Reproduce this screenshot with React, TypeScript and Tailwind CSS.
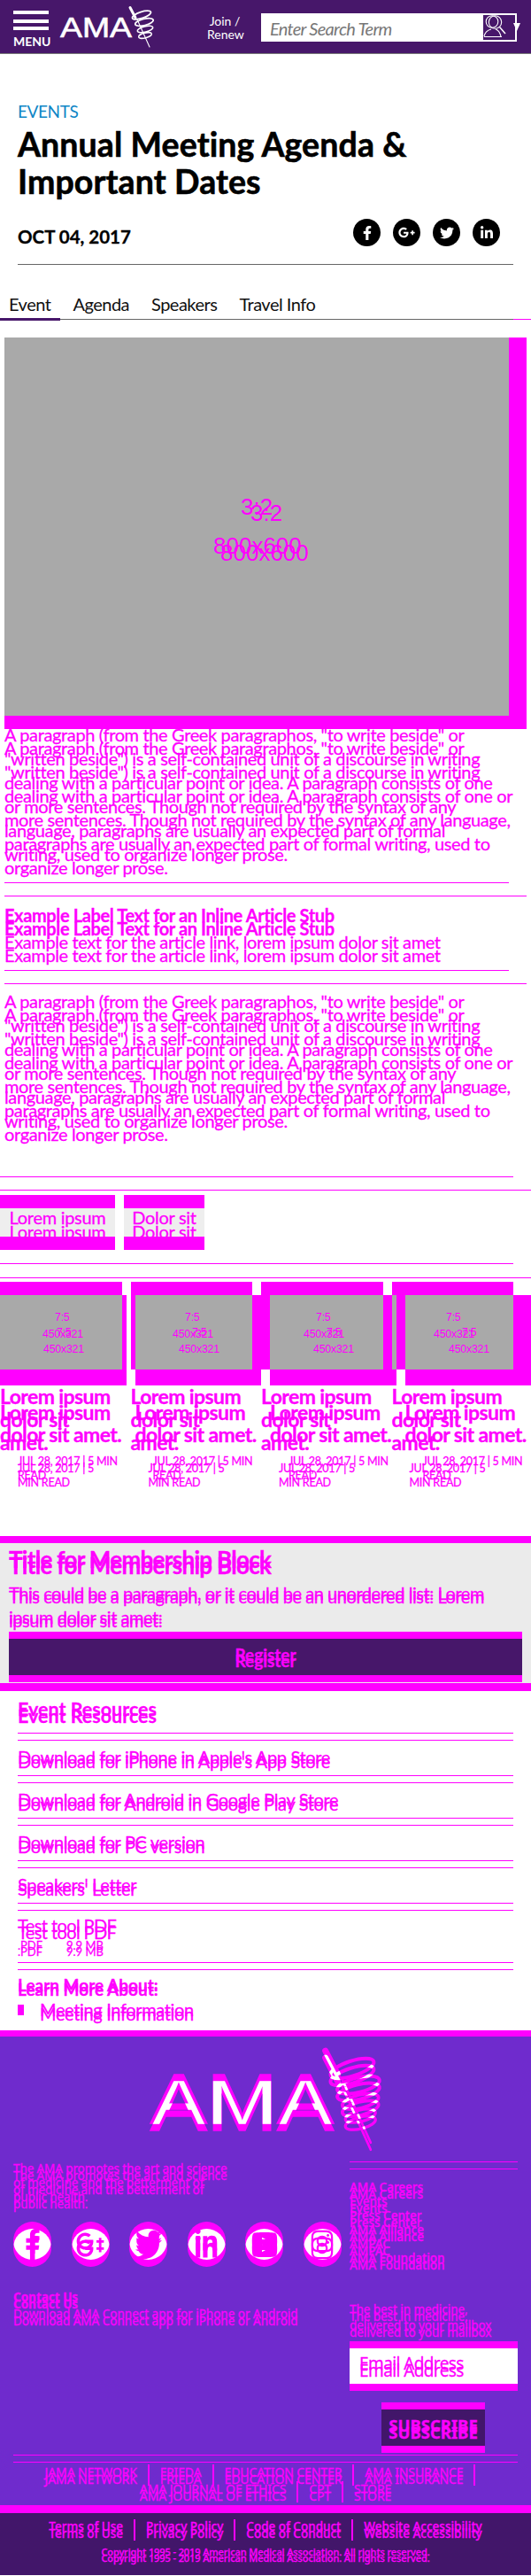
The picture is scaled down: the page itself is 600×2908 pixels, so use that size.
import React from "react";
import { FaFacebookF, FaGooglePlusG, FaTwitter, FaLinkedinIn, FaYoutube, FaInstagram } from "react-icons/fa";

const M = "text-[#ff00ff] [-webkit-text-stroke:0.3px_#ff00ff]";

function L({ t }: { t: string[] }) {
  return (
    <>
      {t.map((s, i) => (
        <div key={i} className="whitespace-nowrap">{s}</div>
      ))}
    </>
  );
}

function Dbl({ a, b, bCls, className }: { a: React.ReactNode; b: React.ReactNode; bCls: string; className?: string }) {
  return (
    <div className={`grid ${className ?? ""}`}>
      <div className="[grid-area:1/1]">{a}</div>
      <div className={`[grid-area:1/1] ${bCls}`}>{b}</div>
    </div>
  );
}

function Rule({ className }: { className: string }) {
  return <div className={`h-px bg-[#ff00ff] ${className}`} />;
}

const paraA = [
  'A paragraph (from the Greek paragraphos, "to write beside" or',
  '"written beside") is a self-contained unit of a discourse in writing',
  "dealing with a particular point or idea. A paragraph consists of one",
  "or more sentences. Though not required by the syntax of any",
  "language, paragraphs are usually an expected part of formal",
  "writing, used to organize longer prose.",
];
const paraB = [
  'A paragraph (from the Greek paragraphos, "to write beside" or',
  '"written beside") is a self-contained unit of a discourse in writing',
  "dealing with a particular point or idea. A paragraph consists of one or",
  "more sentences. Though not required by the syntax of any language,",
  "paragraphs are usually an expected part of formal writing, used to",
  "organize longer prose.",
];

function Para({ className }: { className: string }) {
  return (
    <div className={`ml-[5px] text-[20px] leading-[27px] tracking-[-0.36px] ${M} ${className}`}>
      <Dbl a={<L t={paraA} />} b={<L t={paraB} />} bCls="mt-[15px]" />
    </div>
  );
}

function SerpentShape() {
  return (
    <g fill="none" strokeLinecap="round">
      <path d="M2 0.5 L8 12" strokeWidth="3" />
      <path d="M10 14 L24 45" strokeWidth="1.1" />
      <ellipse cx="15" cy="9" rx="11" ry="3.6" transform="rotate(-18 15 9)" strokeWidth="1.7" />
      <ellipse cx="18" cy="17" rx="10.5" ry="3.6" transform="rotate(-14 18 17)" strokeWidth="1.7" />
      <ellipse cx="19" cy="25" rx="9" ry="3.2" transform="rotate(-14 19 25)" strokeWidth="1.6" />
      <ellipse cx="19" cy="32" rx="7.5" ry="2.8" transform="rotate(-14 19 32)" strokeWidth="1.4" />
    </g>
  );
}

function HeaderLogo() {
  return (
    <svg width="115" height="60" viewBox="0 0 115 60" className="block">
      <text
        x="4"
        y="42"
        fontFamily="'Liberation Sans',sans-serif"
        fontSize="31"
        fill="#fff"
        stroke="#fff"
        strokeWidth="0.6"
        textLength="81"
        lengthAdjust="spacingAndGlyphs"
      >
        AMA
      </text>
      <g stroke="#fff" transform="translate(81 8)">
        <SerpentShape />
      </g>
    </svg>
  );
}

function FooterLogo() {
  const txt = (y: number, fill: string, mask?: string) => (
    <text
      x="5"
      y={y}
      fontFamily="'Liberation Sans',sans-serif"
      fontSize="80"
      fill={fill}
      stroke={fill}
      strokeWidth="1.6"
      textLength="207"
      lengthAdjust="spacingAndGlyphs"
      mask={mask}
    >
      AMA
    </text>
  );
  const snake = (dy: number, col: string, mask?: string) => (
    <g mask={mask}>
      <g stroke={col} transform={`translate(198 ${5 + dy}) scale(2.33)`}>
        <SerpentShape />
      </g>
    </g>
  );
  return (
    <svg width="275" height="120" viewBox="0 0 275 120" className="ml-[165px] block">
      <defs>
        <mask id="ftr-t" maskUnits="userSpaceOnUse" x="0" y="0" width="275" height="120">
          {txt(96, "#fff")}
        </mask>
        <mask id="ftr-s" maskUnits="userSpaceOnUse" x="0" y="0" width="275" height="120">
          {snake(8, "#fff")}
        </mask>
      </defs>
      {txt(88, "#ff00ff")}
      {txt(96, "#ff00ff")}
      {txt(88, "#fff", "url(#ftr-t)")}
      {snake(0, "#ff00ff")}
      {snake(8, "#ff00ff")}
      {snake(0, "#fff", "url(#ftr-s)")}
    </svg>
  );
}

function Header() {
  return (
    <div className="flex h-[61px] border-b border-[#777] bg-[#47176a]">
      <div className="ml-[15px] w-[40px]">
        <div className="mt-[12px] h-[4px] bg-white" />
        <div className="mt-[6px] h-[4px] bg-white" />
        <div className="mt-[4px] h-[4px] bg-white" />
        <div className="mt-[6px] text-center text-[14px] font-bold leading-[14px] text-white">MENU</div>
      </div>
      <div className="ml-[9px] w-[115px]">
        <HeaderLogo />
      </div>
      <div className="ml-[55px] mt-[16px] w-[40px] text-center text-[14px] leading-[15px] text-white">
        Join /<br />Renew
      </div>
      <div className="relative ml-[21px] mt-[15px] flex h-[32px] w-[289px] bg-white">
        <div className="w-[251px] pl-[10px] text-[20px] italic leading-[34px] tracking-[-0.7px] text-[#777]">Enter Search Term</div>
        <div className="h-[32px] w-[38px] border-2 border-l-0 border-white bg-[#47176a]">
          <svg width="28" height="28" viewBox="0 0 28 28" fill="none" stroke="#fff" strokeWidth="1.1" className="block">
            <circle cx="10" cy="7.5" r="6.8" />
            <circle cx="13.5" cy="8" r="7.2" />
            <path d="M18.5 13.5 L25 21" strokeWidth="1.5" />
            <path d="M1 24 C2 19 5 17 9 16 M14 16 C17 17 19 20 20 24 M1 24.5 H21" />
          </svg>
        </div>
        <div className="absolute left-[285px] top-[11px] h-0 w-0 border-x-[4.5px] border-t-[9px] border-x-transparent border-t-white" />
      </div>
    </div>
  );
}

function Hero() {
  const icons = [FaFacebookF, FaGooglePlusG, FaTwitter, FaLinkedinIn];
  return (
    <div>
      <div className="ml-[20px] mt-[53px] h-[24px] text-[19px] leading-[24px] tracking-[-0.4px] text-[#0f86c6]">EVENTS</div>
      <div className="ml-[20px] mt-[4px] text-[37.5px] font-bold leading-[41.5px] tracking-[0.1px] text-black [-webkit-text-stroke:0.6px_#000]">
        Annual Meeting Agenda &amp;<br />Important Dates
      </div>
      <div className="mx-[20px] mt-[22px] flex h-[31px]">
        <div className="w-[375px] pt-[8px] text-[20.5px] font-bold leading-[24px] text-black [-webkit-text-stroke:0.3px_#000]">OCT 04, 2017</div>
        <div className="ml-[4px] flex gap-[14px]">
          {icons.map((I, i) => (
            <div key={i} className="flex h-[31px] w-[31px] items-center justify-center rounded-full bg-black text-white">
              <I size={i === 1 ? 19 : 16} />
            </div>
          ))}
        </div>
      </div>
      <div className="ml-[20px] mt-[20px] h-px w-[560px] bg-[#666]" />
      <div className="flex h-[61px] gap-[25px] pl-[10px] pt-[32px] text-[20px] leading-[24px] tracking-[-0.5px] text-[#111]">
        <span>Event</span>
        <span>Agenda</span>
        <span>Speakers</span>
        <span>Travel Info</span>
      </div>
      <div className="relative flex h-px">
        <div className="w-[580px] bg-[#666]" />
        <div className="w-[20px] bg-[#ff00ff]" />
        <div className="absolute -top-px left-0 h-[3px] w-[68px] bg-[#47176a]" />
      </div>
    </div>
  );
}

function Hero2() {
  return (
    <div className="ml-[5px] mt-[20px] w-[590px]">
      <div className="flex h-[427px]">
        <div className="relative w-[570px] bg-[#a9a9a9] [font-family:'Liberation_Sans',sans-serif] text-[26px] leading-[30px] text-[#ff00ff]">
          <div className="absolute left-[267px] top-[176px]">3:2</div>
          <div className="absolute left-[278px] top-[183px]">3:2</div>
          <div className="absolute left-[236px] top-[220px]">800x600</div>
          <div className="absolute left-[244px] top-[228px]">800x600</div>
        </div>
        <div className="w-[20px] bg-[#ff00ff]" />
      </div>
      <div className="h-[15px] bg-[#ff00ff]" />
    </div>
  );
}

function Tag({ t, w }: { t: string; w: string }) {
  return (
    <div className={`${w} h-[62px] border-y-[15px] border-[#ff00ff] bg-[#eee] text-center text-[20px] leading-[16px] tracking-[-0.3px] ${M}`}>
      <div className="pt-[2px]">{t}</div>
      <div>{t}</div>
    </div>
  );
}

function ImgText({ x, y, t }: { x: string; y: string; t: string }) {
  return <div className={`absolute whitespace-nowrap [font-family:'Liberation_Sans',sans-serif] text-[12.5px] leading-[14px] tracking-[-0.3px] text-[#ff00ff] ${x} ${y}`}>{t}</div>;
}

function ImageStrips() {
  const W = "bg-white";
  const P = "bg-[#ff00ff]";
  const G = "bg-[#a9a9a9]";
  return (
    <div className="relative mt-[4px]">
      <div className="flex h-[15px]">
        <div className={`w-[138px] ${P}`} />
        <div className="w-[10px]" />
        <div className={`w-[137px] ${P}`} />
        <div className="w-[10px]" />
        <div className={`w-[138px] ${P}`} />
        <div className="w-[10px]" />
        <div className={`w-[137px] ${P}`} />
      </div>
      <div className="flex h-[84px]">
        <div className={`w-[138px] ${G}`} />
        <div className={`w-[5px] ${P}`} />
        <div className={`w-[5px] ${W}`} />
        <div className={`w-[5px] ${P}`} />
        <div className={`w-[132px] ${G}`} />
        <div className={`w-[20px] ${P}`} />
        <div className={`w-[128px] ${G}`} />
        <div className={`w-[10px] ${P}`} />
        <div className={`w-[5px] ${G}`} />
        <div className={`w-[10px] ${P}`} />
        <div className={`w-[122px] ${G}`} />
        <div className={`w-[20px] ${P}`} />
      </div>
      <div className="flex h-[18px]">
        <div className={`w-[143px] ${P}`} />
        <div className="w-[10px]" />
        <div className={`w-[142px] ${P}`} />
        <div className="w-[10px]" />
        <div className={`w-[143px] ${P}`} />
        <div className="w-[10px]" />
        <div className={`w-[142px] ${P}`} />
      </div>
      <ImgText x="left-[62px]" y="top-[33px]" t="7:5" />
      <ImgText x="left-[48px]" y="top-[52px]" t="450x321" />
      <ImgText x="left-[64px]" y="top-[50px]" t="7:5" />
      <ImgText x="left-[49px]" y="top-[69px]" t="450x321" />
      <ImgText x="left-[209px]" y="top-[33px]" t="7:5" />
      <ImgText x="left-[195px]" y="top-[52px]" t="450x321" />
      <ImgText x="left-[217px]" y="top-[50px]" t="7:5" />
      <ImgText x="left-[202px]" y="top-[69px]" t="450x321" />
      <ImgText x="left-[357px]" y="top-[33px]" t="7:5" />
      <ImgText x="left-[343px]" y="top-[52px]" t="450x321" />
      <ImgText x="left-[369px]" y="top-[50px]" t="7:5" />
      <ImgText x="left-[354px]" y="top-[69px]" t="450x321" />
      <ImgText x="left-[504px]" y="top-[33px]" t="7:5" />
      <ImgText x="left-[490px]" y="top-[52px]" t="450x321" />
      <ImgText x="left-[522px]" y="top-[50px]" t="7:5" />
      <ImgText x="left-[507px]" y="top-[69px]" t="450x321" />
    </div>
  );
}

function Meta({ l1, l2, cls }: { l1: React.ReactNode; l2: string; cls: string }) {
  return (
    <div className={`text-[12.5px] leading-[16px] tracking-[-0.25px] ${M} ${cls}`}>
      <div className="whitespace-nowrap">{l1}</div>
      <div className="whitespace-nowrap">{l2}</div>
    </div>
  );
}

function Cards() {
  const a = ["ml-[20px]", "ml-[25px]", "ml-[31px]", "ml-[35px]"];
  const b = ["ml-[20px]", "ml-[15px]", "ml-[10px]", "ml-[5px]"];
  const T = "text-[23px] font-bold tracking-[-0.6px]";
  return (
    <div className={`-mt-[1px] h-[171px] ${M}`}>
      <Dbl
        bCls="mt-[19px]"
        a={
          <div className="grid w-[580px] grid-cols-4 gap-[10px]">
            {a.map((c) => (
              <div key={c}>
                <div className={`${T} leading-[26px]`}>
                  <L t={["Lorem ipsum", "dolor sit", "amet."]} />
                </div>
                <Meta cls={`mt-[1px] ${c}`} l1="JUL 28, 2017 | 5 MIN" l2="READ" />
              </div>
            ))}
          </div>
        }
        b={
          <div className="grid w-[600px] grid-cols-4 gap-[10px]">
            {b.map((c) => (
              <div key={c}>
                <div className={`${T} leading-[25px]`}>
                  <L t={["Lorem ipsum", "dolor sit amet."]} />
                </div>
                <Meta cls={`mt-[18px] ${c}`} l1="JUL 28, 2017 | 5" l2="MIN READ" />
              </div>
            ))}
          </div>
        }
      />
    </div>
  );
}

function Membership() {
  return (
    <div className="border-y-[8px] border-b-[9px] border-[#ff00ff] bg-[#ebebeb]">
      <div className={`ml-[10px] pt-[3px] text-[26px] font-bold leading-[30px] tracking-[-0.7px] ${M}`}>
        <Dbl a={<div>Title for Membership Block</div>} b={<div>Title for Membership Block</div>} bCls="mt-[7px]" />
      </div>
      <div className={`ml-[10px] mt-[3px] text-[20px] leading-[26.5px] tracking-[-0.45px] ${M}`}>
        <Dbl
          a={<L t={["This could be a paragraph, or it could be an unordered list: Lorem", "ipsum dolor sit amet:"]} />}
          b={<L t={["This could be a paragraph, or it could be an unordered list: Lorem", "ipsum dolor sit amet:"]} />}
          bCls="mt-[4px]"
        />
      </div>
      <div className={`mx-[10px] mb-[1px] h-[57px] border-y-[8px] border-[#ff00ff] bg-[#47176a] text-center text-[19px] font-bold leading-[24px] ${M}`}>
        <Dbl a={<div className="pt-[6px]">Register</div>} b={<div className="pt-[6px]">Register</div>} bCls="mt-[7px]" />
      </div>
    </div>
  );
}

function ResItem({ t }: { t: string }) {
  return (
    <div>
      <div className={`h-[39px] pt-[6px] text-[20px] leading-[24px] tracking-[-0.35px] ${M}`}>
        <Dbl a={<div>{t}</div>} b={<div>{t}</div>} bCls="mt-[5px]" />
      </div>
      <Rule className="" />
      <Rule className="mt-[7px]" />
    </div>
  );
}

function Resources() {
  return (
    <div className="mx-[20px] h-[383px] pt-[8px]">
      <div className={`h-[39px] text-[21.5px] font-bold leading-[24px] ${M}`}>
        <Dbl a={<div>Event Resources</div>} b={<div>Event Resources</div>} bCls="mt-[8px]" />
      </div>
      <Rule className="" />
      <Rule className="mt-[7px]" />
      <ResItem t="Download for iPhone in Apple's App Store" />
      <ResItem t="Download for Android in Google Play Store" />
      <ResItem t="Download for PC version" />
      <ResItem t="Speakers' Letter" />
      <div className={`h-[58px] pt-[4px] ${M}`}>
        <Dbl
          bCls="mt-[8px]"
          a={
            <div>
              <div className="text-[20px] leading-[24px] tracking-[-0.6px]">Test tool PDF</div>
              <div className="mt-[3px] flex text-[13px] leading-[16px]">
                <span className="w-[55px]">.PDF</span>
                <span>9.9 MB</span>
              </div>
            </div>
          }
          b={
            <div>
              <div className="text-[20px] leading-[24px] tracking-[-0.6px]">Test tool PDF</div>
              <div className="mt-[2px] flex text-[13px] leading-[16px]">
                <span className="w-[55px]">.PDF</span>
                <span>9.9 MB</span>
              </div>
            </div>
          }
        />
      </div>
      <Rule className="" />
      <Rule className="mt-[7px]" />
      <div className={`mt-[5px] ${M}`}>
        <Dbl
          bCls="mt-[5px]"
          a={
            <div>
              <div className="text-[19px] font-bold leading-[24px]">Learn More About:</div>
              <div className="mt-[2px] flex text-[20px] leading-[26px] tracking-[-0.35px]">
                <span className="mt-[8px] mr-[18px] h-[7px] w-[7px] bg-[#ff00ff]" />
                <span>Meeting Information</span>
              </div>
            </div>
          }
          b={
            <div>
              <div className="text-[19px] font-bold leading-[24px]">Learn More About:</div>
              <div className="mt-[2px] flex text-[20px] leading-[26px] tracking-[-0.35px]">
                <span className="mt-[8px] mr-[18px] h-[7px] w-[7px] bg-[#ff00ff]" />
                <span>Meeting Information</span>
              </div>
            </div>
          }
        />
      </div>
    </div>
  );
}

function Coin({ I, size }: { I: React.ComponentType<{ size: number; className?: string }>; size: number }) {
  return (
    <div className="relative h-[51px] w-[43px]">
      <div className="absolute left-0 top-0 h-[43px] w-[43px] rounded-full bg-[#ff00ff]" />
      <div className="absolute left-0 top-[8px] h-[43px] w-[43px] rounded-full bg-[#ff00ff]" />
      <div className="absolute left-0 top-[8px] h-[43px] w-[43px] overflow-hidden rounded-full">
        <div className="-mt-[8px] h-[43px] w-[43px] rounded-full bg-white" />
      </div>
      <div className="absolute left-0 top-0 flex h-[43px] w-[43px] items-center justify-center text-[#ff00ff]">
        <I size={size} />
      </div>
      <div className="absolute left-0 top-[8px] flex h-[43px] w-[43px] items-center justify-center text-[#ff00ff]">
        <I size={size} />
      </div>
    </div>
  );
}

function Sep({ h }: { h: string }) {
  return (
    <span className={`mx-[12px] inline-block w-[2px] bg-[#ff00ff] align-top ${h}`} />
  );
}

function FooterLinks({ rows, sepH }: { rows: string[][]; sepH: string }) {
  return (
    <div>
      {rows.map((r, i) => (
        <div key={i} className="flex justify-center whitespace-nowrap">
          {r.map((s, j) => (
            <React.Fragment key={j}>
              <span>{s}</span>
              {(j < r.length - 1 || (r.length === 4 && r[0] === "JAMA NETWORK")) && <Sep h={sepH} />}
            </React.Fragment>
          ))}
        </div>
      ))}
    </div>
  );
}

function Footer() {
  const items = ["AMA Careers", "Events", "Press Center", "AMA Alliance", "AMPAC", "AMA Foundation"];
  const coins = [FaFacebookF, FaGooglePlusG, FaTwitter, FaLinkedinIn, FaYoutube, FaInstagram];
  const rows = [
    ["JAMA NETWORK", "FRIEDA", "EDUCATION CENTER", "AMA INSURANCE"],
    ["AMA JOURNAL OF ETHICS", "CPT", "STORE"],
  ];
  const rows2 = [["Terms of Use", "Privacy Policy", "Code of Conduct", "Website Accessibility"]];
  return (
    <div className="[font-family:'Noto_Sans',sans-serif]">
      <div className="h-[7px] bg-[#ff00ff]" />
      <div className="h-[529px] bg-[#6f2bcd] pt-[10px]">
        <FooterLogo />
        <div className="flex px-[15px]">
          <div className="w-[380px]">
            <div className={`mt-[11px] text-[13.5px] leading-[16px] tracking-[-0.1px] ${M}`}>
              <Dbl
                a={<L t={["The AMA promotes the art and science", "of medicine and the betterment of", "public health."]} />}
                b={<L t={["The AMA promotes the art and science", "of medicine and the betterment of", "public health."]} />}
                bCls="mt-[8px]"
              />
            </div>
            <div className="mt-[12px] flex w-[371px] justify-between">
              {coins.map((c, i) => (
                <Coin key={i} I={c} size={i === 2 || i === 4 ? 30 : i === 1 ? 32 : 28} />
              ))}
            </div>
            <div className={`mt-[26px] text-[13.5px] leading-[16px] ${M}`}>
              <Dbl
                bCls="mt-[8px]"
                a={
                  <div>
                    <div className="font-bold">Contact Us</div>
                    <div className="mt-[3px]">Download AMA Connect app for iPhone or Android</div>
                  </div>
                }
                b={
                  <div>
                    <div className="font-bold">Contact Us</div>
                    <div className="mt-[3px]">Download AMA Connect app for iPhone or Android</div>
                  </div>
                }
              />
            </div>
          </div>
          <div className="w-[190px]">
            <Rule className="mt-[11px]" />
            <Rule className="mt-[7px]" />
            <div className={`mt-[12px] text-[13.5px] font-medium leading-[16px] ${M}`}>
              <Dbl a={<L t={items} />} b={<L t={items} />} bCls="mt-[8px]" />
            </div>
            <div className={`mt-[33px] text-[13.5px] leading-[18px] tracking-[-0.05px] ${M}`}>
              <Dbl
                a={<L t={["The best in medicine,", "delivered to your mailbox"]} />}
                b={<L t={["The best in medicine,", "delivered to your mailbox"]} />}
                bCls="mt-[8px]"
              />
            </div>
            <div className={`mt-[1px] h-[56px] border-y-[8px] border-[#ff00ff] bg-white pl-[11px] text-[19px] leading-[24px] tracking-[-0.6px] ${M}`}>
              <Dbl a={<div className="pt-[5px]">Email Address</div>} b={<div className="pt-[5px]">Email Address</div>} bCls="mt-[8px]" />
            </div>
            <div className={`ml-[36px] mt-[13px] h-[57px] w-[117px] border-y-[8px] border-[#ff00ff] bg-[#42166a] text-center text-[18.5px] font-bold leading-[24px] ${M}`}>
              <Dbl a={<div className="pt-[6px]">SUBSCRIBE</div>} b={<div className="pt-[6px]">SUBSCRIBE</div>} bCls="mt-[8px]" />
            </div>
          </div>
        </div>
        <Rule className="mx-[15px] mt-[2px]" />
        <Rule className="mx-[15px] mt-[7px]" />
        <div className={`mt-[2px] text-[14px] leading-[18.5px] tracking-[-0.1px] ${M}`}>
          <Dbl
            bCls="mt-[8px]"
            a={<FooterLinks rows={rows} sepH="h-[16px]" />}
            b={<FooterLinks rows={rows} sepH="h-[16px]" />}
          />
        </div>
      </div>
      <div className="h-[9px] bg-[#ff00ff]" />
      <div className="h-[70px] overflow-hidden bg-[#42166a] pt-[7px]">
        <div className={`text-[13.5px] font-medium leading-[16px] ${M}`}>
          <Dbl
            bCls="mt-[8px]"
            a={<FooterLinks rows={rows2} sepH="h-[16px]" />}
            b={<FooterLinks rows={rows2} sepH="h-[16px]" />}
          />
        </div>
        <div className={`mt-[5px] text-center text-[11px] font-medium leading-[16px] tracking-[-0.1px] ${M}`}>
          <Dbl
            bCls="mt-[7px]"
            a={<div>Copyright 1995 - 2019 American Medical Association. All rights reserved.</div>}
            b={<div>Copyright 1995 - 2019 American Medical Association. All rights reserved.</div>}
          />
        </div>
      </div>
    </div>
  );
}

export default function App() {
  return (
    <div className="h-[2908px] w-[600px] overflow-hidden bg-white [font-family:'Lato',sans-serif]">
      <Header />
      <Hero />
      <Hero2 />
      <Para className="-mt-[7px] h-[180px]" />
      <Rule className="ml-[5px] w-[570px]" />
      <Rule className="ml-[5px] mt-[14px] w-[590px]" />
      <div className={`ml-[5px] mt-[14px] h-[60px] text-[20px] leading-[15px] tracking-[-0.38px] ${M}`}>
        <div className="font-bold">Example Label Text for an Inline Article Stub</div>
        <div className="font-bold">Example Label Text for an Inline Article Stub</div>
        <div>Example text for the article link, lorem ipsum dolor sit amet</div>
        <div>Example text for the article link, lorem ipsum dolor sit amet</div>
      </div>
      <Rule className="ml-[5px] mt-[9px] w-[570px]" />
      <Rule className="ml-[5px] mt-[14px] w-[590px]" />
      <Para className="mt-[6px] h-[211px]" />
      <Rule className="w-[580px]" />
      <Rule className="mt-[14px] w-[600px]" />
      <div className="mt-[5px] flex gap-[10px]">
        <Tag t="Lorem ipsum" w="w-[130px]" />
        <Tag t="Dolor sit" w="w-[91px]" />
      </div>
      <Rule className="mt-[15px] w-[580px]" />
      <Rule className="mt-[15px] w-[600px]" />
      <ImageStrips />
      <Cards />
      <Membership />
      <Resources />
      <Footer />
    </div>
  );
}
